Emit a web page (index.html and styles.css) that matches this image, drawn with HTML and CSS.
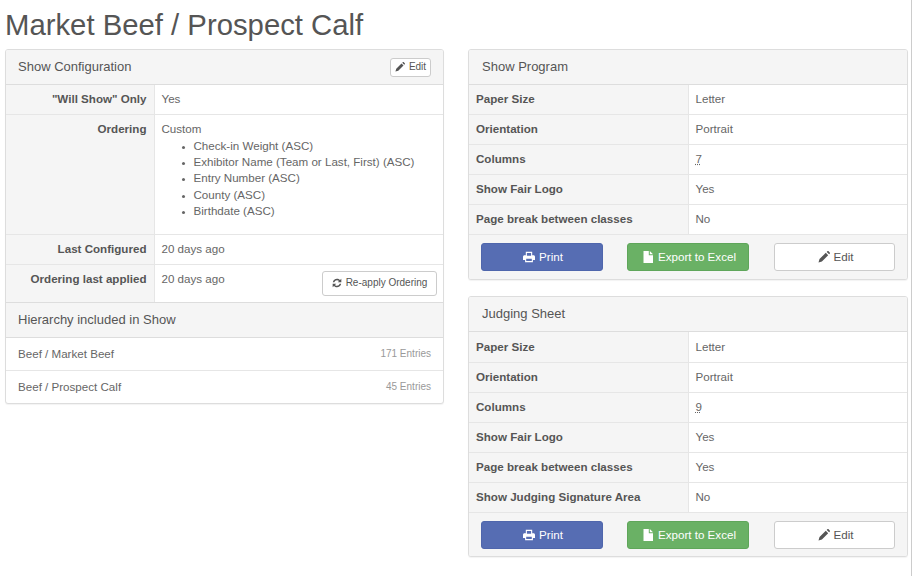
FILE: index.html
```html
<!DOCTYPE html>
<html lang="en">
<head>
    <meta charset="UTF-8">
    <title>Market Beef / Prospect Calf</title>
    <link rel="stylesheet" href="styles.css">
</head>
<body>
    <svg class="icon-defs" width="0" height="0" aria-hidden="true">
        <symbol id="i-pencil" viewBox="0 0 12 12">
            <path d="M7.800 1.800l2.400 2.400-6.300 6.300-3.400 1 1-3.400z M8.700.9l.6-.6c.4-.4.9-.4 1.300 0l1.100 1.100c.4.4.4.9 0 1.300l-.6.6z"/>
        </symbol>
        <symbol id="i-refresh" viewBox="0 0 12 12">
            <path d="M6 .8c1.400 0 2.700.6 3.600 1.500L11.200.9v4.300H6.900l1.500-1.500C7.800 3 7 2.600 6 2.600c-1.500 0-2.800 1-3.200 2.400H1C1.500 2.500 3.500.8 6 .8z M.8 6.800h4.300L3.600 8.300c.6.700 1.400 1.100 2.400 1.100 1.500 0 2.800-1 3.200-2.400H11c-.5 2.500-2.500 4.200-5 4.200-1.400 0-2.700-.6-3.600-1.500L.8 11.100z"/>
        </symbol>
        <symbol id="i-print" viewBox="0 0 12 12">
            <path fill-rule="evenodd" d="M2.800.8h6.400v3.400h1.300c.8 0 1.500.7 1.500 1.500v3.300H9.900v2.200H2.100V9H0V5.700c0-.8.700-1.500 1.500-1.500h1.300z M3.900 1.900v2.800h4.200V1.900z M3.200 7.700v2.400h5.600V7.700z"/>
        </symbol>
        <symbol id="i-file" viewBox="0 0 12 12">
            <path d="M1.500 0h5.300v4.200H11V12H1.500z M7.800 0L11 3.200H7.800z"/>
        </symbol>
    </svg>

    <h1 class="page-title">Market Beef / Prospect Calf</h1>

    <div class="columns">
        <div class="column">
            <section class="panel">
                <div class="panel-heading heading-split">
                    <span>Show Configuration</span>
                    <a href="#" class="btn btn-xs"><svg class="icon"><use href="#i-pencil"/></svg>Edit</a>
                </div>
                <table class="info info-config info-tight">
                    <tr><th>"Will Show" Only</th><td>Yes</td></tr>
                    <tr class="row-ordering">
                        <th>Ordering</th>
                        <td>
                            Custom
                            <ul class="order-list">
                                <li>Check-in Weight (ASC)</li>
                                <li>Exhibitor Name (Team or Last, First) (ASC)</li>
                                <li>Entry Number (ASC)</li>
                                <li>County (ASC)</li>
                                <li>Birthdate (ASC)</li>
                            </ul>
                        </td>
                    </tr>
                    <tr><th>Last Configured</th><td>20 days ago</td></tr>
                    <tr class="row-applied">
                        <th>Ordering last applied</th>
                        <td>
                            <div class="applied">
                                <span>20 days ago</span>
                                <a href="#" class="btn btn-sm"><svg class="icon"><use href="#i-refresh"/></svg>Re-apply Ordering</a>
                            </div>
                        </td>
                    </tr>
                </table>
                <div class="panel-heading heading-inner">Hierarchy included in Show</div>
                <ul class="entries">
                    <li><span>Beef / Market Beef</span><small>171 Entries</small></li>
                    <li><span>Beef / Prospect Calf</span><small>45 Entries</small></li>
                </ul>
            </section>
        </div>

        <div class="column column-right">
            <section class="panel panel-program">
                <div class="panel-heading">Show Program</div>
                <table class="info info-report info-tight">
                    <tr><th>Paper Size</th><td>Letter</td></tr>
                    <tr><th>Orientation</th><td>Portrait</td></tr>
                    <tr><th>Columns</th><td><abbr title="Columns">7</abbr></td></tr>
                    <tr><th>Show Fair Logo</th><td>Yes</td></tr>
                    <tr><th>Page break between classes</th><td>No</td></tr>
                </table>
                <div class="panel-footer">
                    <a href="#" class="btn btn-primary"><svg class="icon"><use href="#i-print"/></svg>Print</a>
                    <a href="#" class="btn btn-success"><svg class="icon"><use href="#i-file"/></svg>Export to Excel</a>
                    <a href="#" class="btn btn-plain"><svg class="icon"><use href="#i-pencil"/></svg>Edit</a>
                </div>
            </section>

            <section class="panel">
                <div class="panel-heading">Judging Sheet</div>
                <table class="info info-report">
                    <tr><th>Paper Size</th><td>Letter</td></tr>
                    <tr><th>Orientation</th><td>Portrait</td></tr>
                    <tr><th>Columns</th><td><abbr title="Columns">9</abbr></td></tr>
                    <tr><th>Show Fair Logo</th><td>Yes</td></tr>
                    <tr><th>Page break between classes</th><td>Yes</td></tr>
                    <tr><th>Show Judging Signature Area</th><td>No</td></tr>
                </table>
                <div class="panel-footer">
                    <a href="#" class="btn btn-primary"><svg class="icon"><use href="#i-print"/></svg>Print</a>
                    <a href="#" class="btn btn-success"><svg class="icon"><use href="#i-file"/></svg>Export to Excel</a>
                    <a href="#" class="btn btn-plain"><svg class="icon"><use href="#i-pencil"/></svg>Edit</a>
                </div>
            </section>
        </div>
    </div>
</body>
</html>
```

FILE: styles.css
```css
/* Page */
html, body {
    margin: 0;
    padding: 0;
    background: #fff;
    overflow: hidden;
}

body {
    width: 912px;
    height: 576px;
    padding: 0 5px;
    box-sizing: border-box;
    border-right: 1px solid #ccc;
    font-family: "Liberation Sans", Arial, sans-serif;
    font-size: 11.6px;
    line-height: 16.33px;
    color: #666;
}

.icon-defs {
    position: absolute;
}

.page-title {
    margin: 0;
    padding-top: 7px;
    height: 49px;
    box-sizing: border-box;
    font-size: 29.3px;
    line-height: 35px;
    font-weight: 400;
    color: #555;
}

.columns {
    display: flex;
    gap: 24px;
    align-items: flex-start;
}

.column {
    width: 439px;
    flex: none;
}

.column-right {
    width: 440px;
    display: flex;
    flex-direction: column;
    gap: 16px;
}

/* Panels */
.panel {
    background: #fff;
    border: 1px solid #ddd;
    border-radius: 3px;
    box-shadow: 0 1px 1px rgba(0, 0, 0, 0.05);
    overflow: hidden;
}

.panel-heading {
    height: 35px;
    padding: 0 12px;
    box-sizing: border-box;
    display: flex;
    align-items: center;
    background: #f5f5f5;
    border-bottom: 1px solid #ddd;
    font-size: 13px;
    color: #555;
}

.column-right .panel-heading {
    padding-left: 13px;
}

.heading-split {
    justify-content: space-between;
}

.heading-inner {
    height: 36px;
    border-top: 1px solid #ddd;
}

.panel-footer {
    height: 44px;
    padding: 8px 12px 0;
    box-sizing: border-box;
    display: flex;
    gap: 24px;
    background: #f5f5f5;
    border-top: 1px solid #e6e6e6;
}

.panel-program .panel-footer {
    height: 45px;
}

/* Tables */
.info {
    width: 100%;
    border-collapse: collapse;
    table-layout: fixed;
}

.info th,
.info td {
    height: 30px;
    padding: 0 7px;
    box-sizing: border-box;
    border-top: 1px solid #e6e6e6;
    vertical-align: middle;
    text-align: left;
    font-weight: 400;
}

.info tr:first-child th,
.info tr:first-child td {
    border-top: 0;
}

.info-tight tr:first-child th,
.info-tight tr:first-child td {
    height: 29px;
}

.info th {
    background: #f5f5f5;
    border-right: 1px solid #e6e6e6;
    font-weight: 700;
    color: #555;
}

.info-config th {
    width: 148px;
    text-align: right;
}

.info-report th {
    width: 219px;
}

.row-ordering th,
.row-ordering td,
.row-applied th,
.row-applied td {
    vertical-align: top;
    padding-top: 6px;
}

.row-ordering td {
    height: 120px;
}

.row-applied td,
.row-applied th {
    height: 38px;
}

.order-list {
    margin: 1px 0 0;
    padding-left: 32px;
}

.order-list li::marker {
    font-size: 9px;
}

.applied {
    display: flex;
    justify-content: space-between;
}

abbr {
    text-decoration: underline dotted;
}

/* Entry list */
.entries {
    list-style: none;
    margin: 0;
    padding: 0;
}

.entries li {
    height: 33px;
    padding: 0 12px;
    box-sizing: border-box;
    display: flex;
    justify-content: space-between;
    align-items: center;
    border-top: 1px solid #e6e6e6;
}

.entries li:first-child {
    height: 32px;
    border-top: 0;
    padding-top: 1px;
}

.entries small {
    font-size: 10px;
    color: #999;
}

/* Buttons */
.btn {
    display: inline-flex;
    align-items: center;
    justify-content: center;
    box-sizing: border-box;
    border: 1px solid #ccc;
    border-radius: 3px;
    background: #fff;
    color: #555;
    text-decoration: none;
}

.icon {
    width: 12px;
    height: 12px;
    margin-right: 4px;
    fill: currentColor;
}

.btn-xs {
    width: 41px;
    height: 19px;
    font-size: 10px;
}

.btn-xs .icon,
.btn-sm .icon {
    width: 10px;
    height: 10px;
}

.btn-sm {
    width: 115px;
    height: 25px;
    font-size: 10px;
    margin-right: -1px;
    margin-top: 0;
}

.btn-primary,
.btn-success,
.btn-plain {
    width: 122px;
    height: 28px;
    padding-left: 2px;
}

.btn-plain {
    width: 121px;
    margin-left: auto;
}

.btn-primary {
    background: #566db3;
    border-color: #4f66ac;
    color: #fff;
}

.btn-success {
    background: #6ab165;
    border-color: #5fa65a;
    color: #fff;
}
```
